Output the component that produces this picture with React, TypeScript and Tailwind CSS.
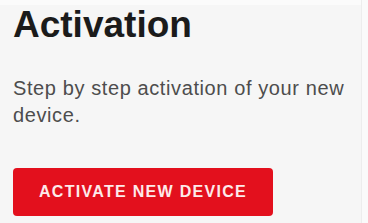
import React from "react";

export default function App() {
    return (
        <div className="w-[368px] h-[223px] flex bg-[#f6f6f6] overflow-hidden" style={{ fontFamily: "'Liberation Sans', Arial, sans-serif" }}>
            <div className="w-[361px] flex flex-col pl-[13px] border-t-[5px] border-[#fbfbfb]">
                <h1 className="text-[37px] leading-[37px] font-bold text-[#1b1b1b] mt-[1px]">Activation</h1>
                <p className="mt-[32px] w-[345px] text-[20px] leading-[27px] tracking-[0.6px] text-[#4d4d4d]">
                    Step by step activation of your new device.
                </p>
                <button className="mt-[39px] w-[260px] h-[48px] rounded-[4px] bg-[#e3101d] text-[16px] font-bold tracking-[1.3px] text-[#fdeaea] text-center">
                    ACTIVATE NEW DEVICE
                </button>
            </div>
            <div className="flex-1 bg-[#fafafa] border-l border-[#ededed]" />
        </div>
    );
}
